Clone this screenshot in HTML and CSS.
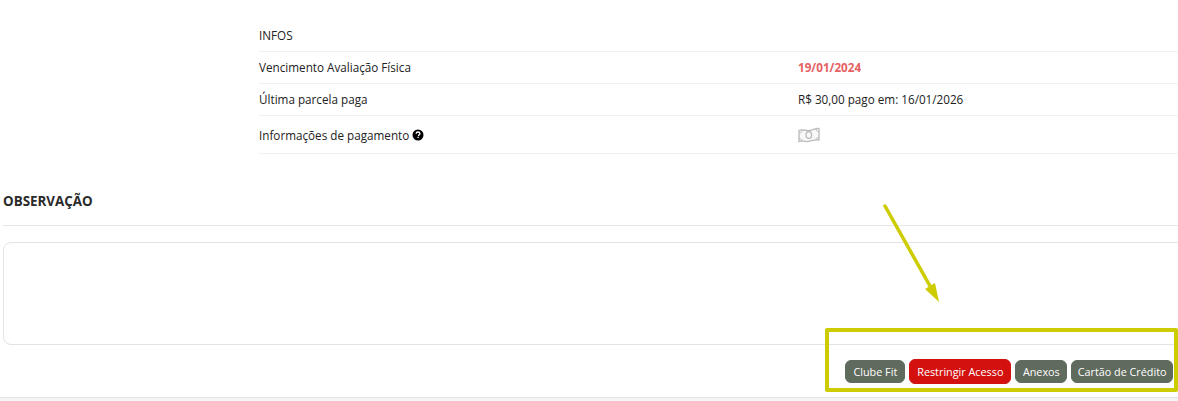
FILE: index.html
```html
<!DOCTYPE html>
<html lang="pt-BR">
<head>
  <meta charset="UTF-8" />
  <title>Observação</title>
  <link rel="stylesheet" href="styles.css">
</head>
<body>
  <div class="infos">
    <div class="info-row first">
      <div class="info-label">INFOS</div>
    </div>
    <div class="info-row">
      <div class="info-label">Vencimento Avaliação Física</div>
      <div class="info-value danger">19/01/2024</div>
    </div>
    <div class="info-row">
      <div class="info-label">Última parcela paga</div>
      <div class="info-value">R$ 30,00 pago em: 16/01/2026</div>
    </div>
    <div class="info-row last">
      <div class="info-label">Informações de pagamento
        <svg class="help" viewBox="0 0 12 12" width="12" height="12">
          <circle cx="6" cy="6" r="5.5" fill="#000"/>
          <path d="M4.1 4.7C4.2 3.6 5 3 6 3s1.9.6 1.9 1.6c0 1.2-1.4 1.3-1.4 2.3" fill="none" stroke="#fff" stroke-width="1.3"/>
          <rect x="5.4" y="7.7" width="1.3" height="1.3" fill="#fff"/>
        </svg>
      </div>
      <div class="info-value">
        <svg class="money" viewBox="0 0 22 16" width="22" height="16">
          <path d="M1 3.500C5 1.500 8 4.500 12 3.500s6-2.500 9-2V13C17 12 14 14 10 14.500S4 13 1 14.500Z" fill="#f8f8f8" stroke="#bbb" stroke-width="1.300"/>
          <ellipse cx="10.800" cy="8" rx="2.800" ry="3.400" fill="none" stroke="#bbb" stroke-width="1.300"/>
          <path d="M1 6C3 6 4 5 4 3.500M21 4.500C19 4.500 18 3.500 18 2M1 11.500C3 11.500 4 12.500 4 13.500M21 10.500C19 10.500 18 11.500 18 12.500" fill="none" stroke="#bbb"/>
        </svg>
      </div>
    </div>
  </div>

  <div class="obs">
    <h3 class="obs-title">OBSERVAÇÃO</h3>
    <div class="obs-box"></div>
    <div class="actions">
      <button class="btn">Clube Fit</button>
      <button class="btn btn-red">Restringir Acesso</button>
      <button class="btn btn-anexos">Anexos</button>
      <button class="btn btn-tight">Cartão de Crédito</button>
    </div>
  </div>
  <div class="page-end"></div>

  <!-- anotacao por cima da tela -->
  <svg class="arrow" viewBox="0 0 70 110" width="70" height="110">
    <path d="M5 5 50 85" stroke="#cccc00" stroke-width="3.500" stroke-linecap="round" fill="none"/>
    <path d="M59 101 45 88 55 82Z" fill="#cccc00"/>
  </svg>
  <div class="highlight"></div>
</body>
</html>
```

FILE: styles.css
```css
html, body {
  height: 401px;
  overflow: hidden;
}
body {
  font-family: "Open Sans", Arial, sans-serif;
  font-size: 11.7px;
  color: #222;
  margin: 0;
  background: #fff;
  position: relative;
}
.infos {
  margin-left: 259px;
  padding-top: 20px;
}
.info-row {
  display: flex;
  align-items: center;
  height: 30px;
  padding-bottom: 1px;
  border-bottom: 1px solid #f0f0f0;
}
.info-row.first {
  height: 32px;
  box-sizing: border-box;
}
.info-row.last {
  height: 37px;
  padding-bottom: 0;
}
.info-label {
  width: 539px;
  display: flex;
  align-items: center;
  gap: 3px;
}
.info-value {
  display: flex;
  align-items: center;
}
.danger {
  color: #e55f63;
  font-weight: 700;
}
.help {
  display: block;
}
.obs {
  padding-top: 37px;
}
.obs-title {
  margin: 0 0 0 3px;
  padding-bottom: 14px;
  font-size: 13.4px;
  line-height: 20px;
  font-weight: 700;
  color: #2b2b2b;
  border-bottom: 1px solid #e8e8e8;
}
.obs-box {
  height: 101px;
  margin: 16px 0 0 3px;
  width: 1200px;
  border: 1px solid #e3e3e3;
  border-radius: 8px;
}
.actions {
  display: flex;
  justify-content: flex-end;
  align-items: center;
  gap: 4px;
  margin-top: 14px;
  padding-right: 5px;
}
.btn {
  font-family: inherit;
  font-size: 10.8px;
  height: 23px;
  padding: 0 7px;
  border: 1px solid #5f6b5d;
  border-radius: 6px;
  background: #5f6b5d;
  color: #fff;
}
.btn-red {
  height: 25px;
  border-color: #d3120f;
  background: #d3120f;
}
.btn-anexos {
  padding: 0 6.500px;
}
.btn-tight {
  padding: 0 5.500px;
}
.page-end {
  position: absolute;
  left: 0;
  right: 0;
  top: 397px;
  height: 4px;
  background: #f5f5f5;
  border-top: 1px solid #e4e4e4;
  box-sizing: border-box;
}
.arrow {
  position: absolute;
  left: 880px;
  top: 201px;
}
.highlight {
  position: absolute;
  left: 825px;
  top: 328px;
  width: 353px;
  height: 64px;
  box-sizing: border-box;
  border: 4px solid #cccc00;
  border-radius: 2px;
}
```
